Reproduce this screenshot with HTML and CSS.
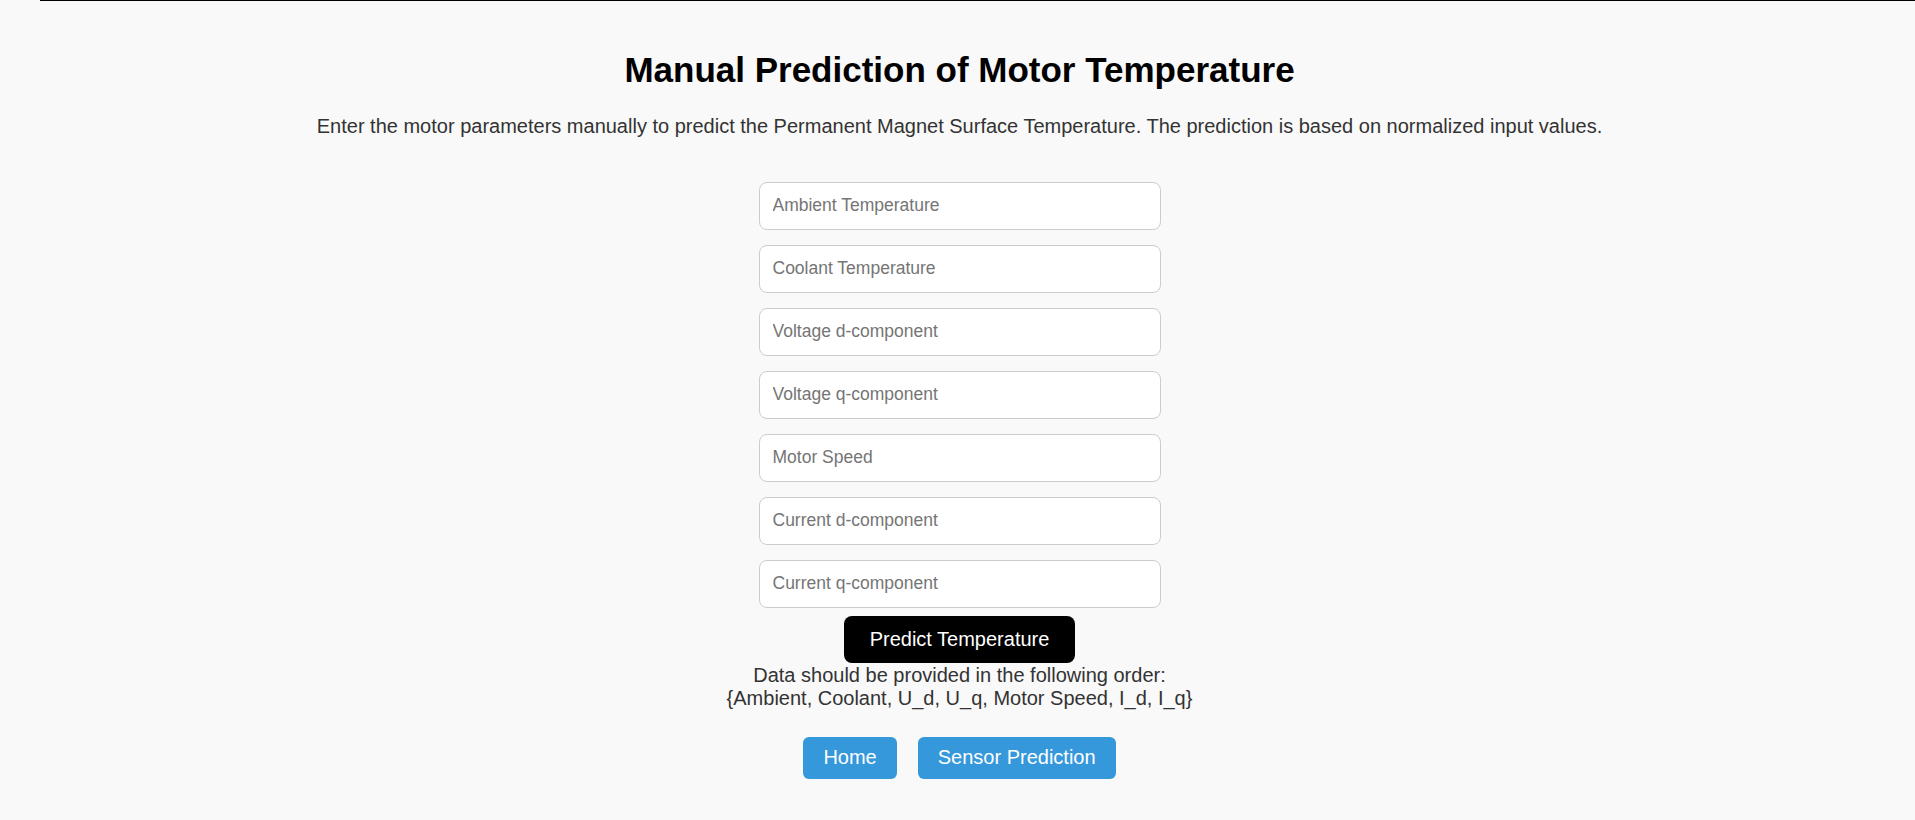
FILE: index.html
```html
<!DOCTYPE html>
<html lang="en">
<head>
<meta charset="utf-8">
<title>Manual Prediction of Motor Temperature</title>
<link rel="stylesheet" href="styles.css">
</head>
<body>
<div class="topline"></div>
<main class="page">
  <h1 class="title">Manual Prediction of Motor Temperature</h1>
  <p class="intro">Enter the motor parameters manually to predict the Permanent Magnet Surface Temperature. The prediction is based on normalized input values.</p>
  <form class="form">
    <input class="field" type="text" placeholder="Ambient Temperature">
    <input class="field" type="text" placeholder="Coolant Temperature">
    <input class="field" type="text" placeholder="Voltage d-component">
    <input class="field" type="text" placeholder="Voltage q-component">
    <input class="field" type="text" placeholder="Motor Speed">
    <input class="field" type="text" placeholder="Current d-component">
    <input class="field" type="text" placeholder="Current q-component">
    <button class="predict" type="button">Predict Temperature</button>
  </form>
  <div class="order">Data should be provided in the following order:<br>{Ambient, Coolant, U_d, U_q, Motor Speed, I_d, I_q}</div>
  <nav class="nav">
    <a class="navbtn" href="#">Home</a>
    <a class="navbtn" href="#">Sensor Prediction</a>
  </nav>
</main>
</body>
</html>
```

FILE: styles.css
```css
html, body {
  margin: 0;
  padding: 0;
}
body {
  background: #f9f9f9;
  font-family: "Liberation Sans", Arial, sans-serif;
  color: #333;
}
.topline {
  height: 1px;
  background: #000;
  margin-left: 40px;
}
.page {
  display: flex;
  flex-direction: column;
  align-items: center;
  padding: 25px 0 0 4px;
}
.title {
  margin: 24px 0 0;
  font-size: 35px;
  line-height: 39px;
  font-weight: bold;
  color: #000;
}
.intro {
  margin: 26px 0 0;
  font-size: 20px;
  line-height: 23px;
  color: #333;
}
.form {
  margin-top: 44px;
  display: flex;
  flex-direction: column;
  align-items: center;
  gap: 15.5px;
}
.field {
  box-sizing: border-box;
  width: 402px;
  height: 47.5px;
  padding: 0 13px;
  border: 1px solid #ccc;
  border-radius: 8px;
  background: #fff;
  font-family: "Liberation Sans", Arial, sans-serif;
  font-size: 17.5px;
  color: #333;
  outline: none;
}
.field::placeholder {
  color: #757575;
}
.predict {
  margin-top: -7px;
  box-sizing: border-box;
  height: 47.3px;
  padding: 0 26px;
  border: none;
  border-radius: 8px;
  background: #000;
  color: #fff;
  font-family: "Liberation Sans", Arial, sans-serif;
  font-size: 20px;
  line-height: 23px;
  cursor: pointer;
}
.order {
  margin-top: 1px;
  font-size: 20px;
  line-height: 23px;
  text-align: center;
  color: #333;
}
.nav {
  margin-top: 26.7px;
  display: flex;
  gap: 21px;
}
.navbtn {
  box-sizing: border-box;
  height: 41.7px;
  padding: 9.5px 20px;
  border-radius: 6px;
  background: #3498db;
  color: #fff;
  text-decoration: none;
  font-size: 20px;
  line-height: 23px;
}
```
